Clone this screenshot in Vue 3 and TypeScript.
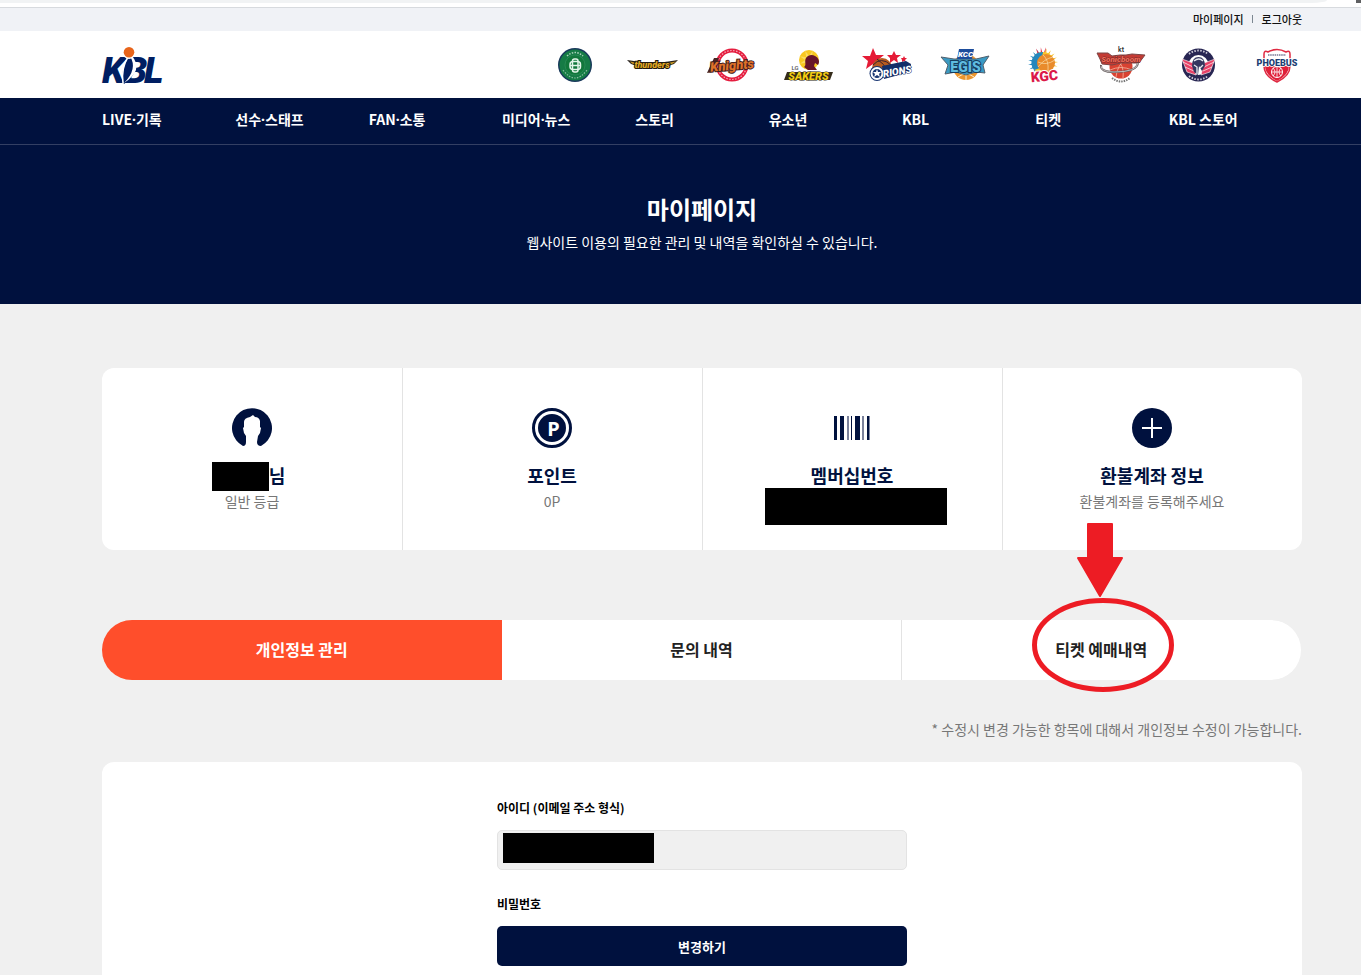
<script setup lang="ts">
import { ref } from 'vue'

const menus: string[][] = [['LIVE', '기록'], ['선수', '스태프'], ['FAN', '소통'], ['미디어', '뉴스'], ['스토리'], ['유소년'], ['KBL'], ['티켓'], ['KBL 스토어']]
const tabs: string[] = ['개인정보 관리', '문의 내역', '티켓 예매내역']
const activeTab = ref(0)

function rays(cx: number, cy: number, inner: number, outer: number, from: number, to: number, step: number): string {
  let d = ''
  for (let a = from; a < to; a += step) {
    const p = (deg: number, r: number) =>
      `${(cx + r * Math.cos((deg * Math.PI) / 180)).toFixed(1)} ${(cy + r * Math.sin((deg * Math.PI) / 180)).toFixed(1)}`
    d += `M${p(a, inner)}L${p(a + step / 2, outer)}L${p(a + step, inner)}Z`
  }
  return d
}
</script>

<template>
  <div class="page">
    <div class="browser-edge"><span class="address"></span><span class="corner"></span></div>
    <div class="topbar">
      <a href="#mypage">마이페이지</a><span class="divider"></span><a href="#logout">로그아웃</a>
    </div>

    <header class="header">
      <a href="#home" class="logo" aria-label="KBL">
        <svg width="62" height="36" viewBox="0 0 62 36">
          <g fill="#001e62" class="logo-text">
            <text x="0" y="36">K</text>
            <text x="22" y="36">B</text>
            <text x="42" y="36">L</text>
          </g>
          <path d="M27 9Q42 22 22 37Q17 26 27 9Z" fill="#001e62" />
          <path d="M26 10Q19 21 21 36" fill="none" stroke="#fff" stroke-width="1.500" />
          <path d="M30 9Q42 23 22 36Q36 22 28 9Z" fill="#fff" />
          <circle cx="27" cy="5.500" r="6.500" fill="#fff" />
          <circle cx="27" cy="5.300" r="5.300" fill="#e8651b" />
        </svg>
      </a>
      <div class="teams">
        <a href="#db" aria-label="DB Promy">
          <svg viewBox="0 0 50 36">
            <circle cx="25" cy="18" r="17" fill="#19395b" />
            <circle cx="25" cy="18" r="15.500" fill="#157b45" />
            <circle cx="25" cy="18" r="10" fill="#11773b" stroke="#3c9664" stroke-width=".5" />
            <path d="M17 9Q25 2 33 9" fill="none" stroke="#d4eadb" stroke-width="1.500" stroke-dasharray="1.500 1.300" stroke-opacity=".8" />
            <path d="M13 23Q25 39 37 23" fill="none" stroke="#d4eadb" stroke-width="1.200" stroke-dasharray="1.500 1.300" stroke-opacity=".6" />
            <rect x="20" y="14.500" width="10.500" height="8" rx="3" fill="none" stroke="#e4f5ea" stroke-width="1.500" />
            <rect x="22.500" y="12" width="5.500" height="13" rx="2" fill="none" stroke="#e4f5ea" stroke-width="1.500" />
            <path d="M20 18.500H30.500" stroke="#e4f5ea" stroke-width="1.500" />
          </svg>
        </a>
        <a href="#thunders" aria-label="Thunders">
          <svg viewBox="0 0 50 36">
            <path d="M-1 13L13 15L37 15L50 13L46 17L40 19L39 21L9 21L9 19L3 17Z" fill="#29231d" />
            <path d="M2 14.500L12 16.500L9 18L4 16.500ZM48 14.500L39 16L41 18L45 16.500Z" fill="#c99724" />
            <text x="24" y="21" font-size="9" class="mark" fill="#e0a822" stroke="#211a10" stroke-width="2">thunders</text>
          </svg>
        </a>
        <a href="#knights" aria-label="Knights">
          <svg viewBox="0 0 50 36">
            <circle cx="26" cy="18" r="14.500" fill="#fff" stroke="#e51d3f" stroke-width="4" />
            <circle cx="26" cy="18" r="14.500" fill="none" stroke="#fff" stroke-width="1.200" stroke-dasharray="1.500 1.500" stroke-opacity=".6" />
            <path d="M1 26L8 11L13 11L7 25Z" fill="#492523" />
            <text x="26" y="23" font-size="13" class="mark" fill="#df7228" stroke="#431d20" stroke-width="2" transform="rotate(-5 25 18)">Knights</text>
          </svg>
        </a>
        <a href="#sakers" aria-label="LG Sakers">
          <svg viewBox="0 0 50 36">
            <circle cx="25" cy="13" r="10" fill="#f9c81f" />
            <path :d="rays(25, 13, 4, 10, 0, 360, 45)" fill="#fbdc60" />
            <path d="M20 20C23 18 20 15 22 11C24 8 28 7 31 9C35 11 36 15 34 18L31 16L30 19L33 23H24Z" fill="#68142a" />
            <text x="11" y="23" font-size="6" class="mark plain" fill="#555">LG</text>
            <path d="M3 25H49L46 33H0Z" fill="#352c1b" />
            <text x="24.500" y="33" font-size="11" class="mark" fill="#f2cb13" stroke="#29230d" stroke-width="1">SAKERS</text>
          </svg>
        </a>
        <a href="#orions" aria-label="Orions">
          <svg viewBox="0 0 50 36">
            <g fill="#e51b36">
              <path d="M11 1L14 8L22 8L16 13L18 21L11 17L4 22L6 14L0 9L8 9Z" />
              <path d="M32 4L34 8L39 8L35 11L36 16L32 13L28 16L28 11L25 8L30 8Z" />
              <path d="M42 9L43 11L45 11L43 13L44 15L42 14L40 15L40 13L39 11L41 11Z" />
            </g>
            <circle cx="20" cy="21" r="10" fill="#b65b20" />
            <path d="M11 18Q19 9 29 18M15 12Q23 17 25 24" fill="none" stroke="#3a2230" />
            <path d="M20 19L44 14L49 17L48 25L22 32Z" fill="#132e68" />
            <circle cx="15" cy="26.500" r="7.500" fill="#183571" />
            <circle cx="15" cy="26.500" r="5.500" fill="#183571" stroke="#fff" stroke-width="2" />
            <path d="M15 22L16 25L19 25L17 27L18 30L15 28L12 30L13 27L11 25L14 25Z" fill="#fff" />
            <text x="35" y="28" font-size="10" class="mark" fill="#fff" stroke="#142f6a" stroke-width="1" transform="rotate(-10 35 24)">RIONS</text>
          </svg>
        </a>
        <a href="#egis" aria-label="KCC Egis">
          <svg viewBox="0 0 50 36">
            <circle cx="26" cy="20" r="13" fill="#eb952e" />
            <path d="M18 30Q26 24 34 30M26 22v11" fill="none" stroke="#fff0cd" />
            <path d="M1 10L14 12H36L49 9L43 18L45 26L36 25L26 28L16 25L5 27L8 18Z" fill="#3a9ac4" stroke="#50606d" stroke-width="1" />
            <text x="25.500" y="25" font-size="14" class="mark upright" fill="#5fbbe0" stroke="#163c5d" stroke-width="2">EGIS</text>
            <path d="M19 2H34L32 12H17Z" fill="#1d4d9c" />
            <text x="25.500" y="10" font-size="8" class="mark" fill="#fff">KCC</text>
          </svg>
        </a>
        <a href="#kgc" aria-label="KGC">
          <svg viewBox="0 0 50 36">
            <path :d="rays(25, 16, 8, 15, 110, 245, 18)" fill="#147fbb" />
            <path :d="rays(25, 16, 8, 16, 235, 280, 18)" fill="#df3750" />
            <path :d="rays(25, 16, 8, 15, 275, 390, 18)" fill="#f4bd20" />
            <circle cx="25" cy="16" r="11" fill="#f8c82d" />
            <path d="M25 5A11 11 0 0 0 16 23L22 21Z" fill="#2387bd" />
            <circle cx="28" cy="16" r="9" fill="#e98b2b" />
            <path d="M20 15Q28 19 37 13M25 8Q31 13 30 24M20 20Q26 12 35 10" fill="none" stroke="#f8d49b" stroke-width=".8" />
            <text x="26.500" y="34" font-size="14" class="mark upright" fill="#db1949" stroke="#fff" stroke-width="2" transform="rotate(-5 26 30)">KGC</text>
          </svg>
        </a>
        <a href="#kt" aria-label="KT Sonicboom">
          <svg viewBox="0 0 50 36">
            <circle cx="25" cy="20" r="11.500" fill="#d94231" />
            <path d="M19 11Q29 18 27 31M31 11Q21 18 20 30M14 23Q25 18 36 23" fill="none" stroke="#f4b6a0" stroke-width=".8" />
            <path d="M1 6L12 6L16 9L24 8L30 8L36 7L49 8L43 16L25 16L16 18L6 17L4 12Z" fill="#c43b34" stroke="#7b4646" stroke-width="1" />
            <path d="M5 18Q4 25 18 25Q42 25 42 15" fill="none" stroke="#645b5c" stroke-width="2" />
            <path d="M5 19Q5 25 18 25Q41 25 42 16" fill="none" stroke="#fff" stroke-width=".6" />
            <text x="25" y="5" font-size="7" class="mark plain" fill="#292929">kt</text>
            <text x="25" y="15" font-size="8" class="mark" fill="#ef6a58" stroke="#752a28" stroke-width="1">Sonicboom</text>
            <path d="M16 31Q25 38 34 31" fill="none" stroke="#777" stroke-width="2" stroke-dasharray="1.500 1" />
          </svg>
        </a>
        <a href="#etland" aria-label="Elephants">
          <svg viewBox="0 0 50 36">
            <circle cx="24.500" cy="18" r="16.500" fill="#282653" />
            <circle cx="24.500" cy="18" r="10" fill="#fff" />
            <path d="M8 12L19 16L22 28L13 25ZM41 12L30 16L27 28L36 25Z" fill="#e74066" stroke="#fff" stroke-width=".6" />
            <path d="M9 15L19 20M11 20L20 24M40 15L30 20M38 20L29 24" stroke="#fff" stroke-width=".7" />
            <path d="M24.500 10Q31 10 31 19L28 24L25 19L24 28L20 25L18 19Q18 10 24.500 10Z" fill="#35365f" />
            <path d="M20 14Q25 10 29 14M20 18L23 20L23 27M29 18L26 21" fill="none" stroke="#e9ecf2" stroke-width="1.300" />
            <path d="M15 7Q24.500 0 34 7M15 29Q24.500 36 34 29" fill="none" stroke="#d2cfdb" stroke-width="1.800" stroke-dasharray="1.500 1.500" />
          </svg>
        </a>
        <a href="#phoebus" aria-label="Phoebus">
          <svg viewBox="0 0 50 36">
            <path d="M12 7Q12 3 16 5Q25 0 34 5Q38 3 38 7V19Q38 29 25 35Q12 29 12 19Z" fill="#fff" stroke="#df2a42" stroke-width="1.500" />
            <path d="M13 19H37Q37 28 25 34Q13 28 13 19Z" fill="#df2039" />
            <path d="M16 8H34" stroke="#9a99ae" stroke-width="2" stroke-dasharray="1.500 .7" />
            <circle cx="25" cy="25" r="5.500" fill="none" stroke="#fff" />
            <path d="M20 25H30M25 20V30M21 21Q25 25 21 29M29 21Q25 25 29 29" fill="none" stroke="#fff" stroke-width=".8" />
            <text x="25" y="19" font-size="9" class="mark upright" fill="#1f3f73" stroke="#fff" stroke-width="1.500">PHOEBUS</text>
          </svg>
        </a>
      </div>
    </header>

    <nav class="nav" aria-label="주 메뉴">
      <a v-for="menu in menus" :key="menu.join('-')" href="#menu">{{ menu[0] }}<template v-if="menu[1]"><span class="dot">·</span>{{ menu[1] }}</template></a>
    </nav>

    <section class="hero">
      <h1>마이페이지</h1>
      <p>웹사이트 이용의 필요한 관리 및 내역을 확인하실 수 있습니다.</p>
    </section>

    <main class="main">
      <section class="cards">
        <div class="card">
          <svg class="icon" viewBox="0 0 40 40">
            <path d="M11 38A20 20 0 1 1 29 38Q25 38 25 34L26 28L28 25L29 20L28 19V13Q27 9 23 9L21 7L18 9Q12 10 12 14V19L11 20L12 25L14 28V34Q14 38 11 38Z" fill="#00113e" />
          </svg>
          <h2><span class="name-mask"></span>님</h2>
          <p>일반 등급</p>
        </div>
        <div class="card">
          <svg class="icon" viewBox="0 0 40 40">
            <circle cx="20" cy="20" r="18.500" fill="#fff" stroke="#00113e" stroke-width="3" />
            <circle cx="20" cy="20" r="14" fill="#00113e" />
            <text x="21.500" y="27.500" class="point-letter" fill="#fff">P</text>
          </svg>
          <h2>포인트</h2>
          <p>0P</p>
        </div>
        <div class="card">
          <svg class="icon" viewBox="0 0 40 40" shape-rendering="crispEdges">
            <path d="M2 8h3v24H2zM8 8h4v24H8zM19 8h1v24h-1zM23 8h5v24h-5zM35 8h2v24h-2z" fill="#00113e" />
            <path d="M15 8h2v24h-2zM30 8h2v24h-2zM37 8h1v24h-1z" fill="#7b829b" />
          </svg>
          <h2>멤버십번호</h2>
          <p class="number-mask"></p>
        </div>
        <div class="card">
          <svg class="icon" viewBox="0 0 40 40">
            <circle cx="20" cy="20" r="20" fill="#00113e" />
            <path d="M10 20H30M20 10V30" stroke="#fff" stroke-width="2" />
          </svg>
          <h2>환불계좌 정보</h2>
          <p>환불계좌를 등록해주세요</p>
        </div>
      </section>

      <div class="tabs" role="tablist">
        <button
          v-for="(tab, i) in tabs"
          :key="tab"
          type="button"
          role="tab"
          :aria-selected="activeTab === i"
          :class="{ active: activeTab === i }"
          @click="activeTab = i"
        >
          {{ tab }}
          <svg v-if="i === 2" class="pointer" viewBox="0 0 142 170" aria-hidden="true">
            <path d="M56 1H80V35H90L68 73L46 35H56Z" fill="#ed1c24" stroke="#ed1c24" stroke-width="2" stroke-linejoin="round" />
            <ellipse cx="71" cy="122" rx="68.500" ry="44.500" fill="none" stroke="#ed1c24" stroke-width="5" />
          </svg>
        </button>
      </div>

      <p class="note">* 수정시 변경 가능한 항목에 대해서 개인정보 수정이 가능합니다.</p>

      <section class="panel">
        <form class="form" @submit.prevent>
          <label for="user-id">아이디 (이메일 주소 형식)</label>
          <div class="field">
            <input id="user-id" type="text" readonly />
            <span class="id-mask"></span>
          </div>
          <label for="change-password">비밀번호</label>
          <button id="change-password" type="button">변경하기</button>
        </form>
      </section>
    </main>
  </div>
</template>

<style>
body {
  margin: 0;
  background: #f0f0f0;
}
</style>

<style scoped>
.page {
  --navy: #00113e;
  --gutter: 0 59px 0 102px;
  min-height: 100vh;
  display: flex;
  flex-direction: column;
  font-family: "Noto Sans CJK KR", "Noto Sans", sans-serif;
  font-size: 14px;
  line-height: 24px;
  color: #222;
  background: #f0f0f0;
}
.page * { box-sizing: border-box; }
a { color: inherit; text-decoration: none; }
h1, h2, p { margin: 0; }
button, input { font-family: inherit; }
button { cursor: pointer; }
svg { display: block; overflow: visible; }

.browser-edge {
  height: 8px;
  display: flex;
  justify-content: space-between;
  background: #fff;
  border-bottom: 1px solid #d7dade;
}
.address {
  flex: 1;
  height: 3px;
  margin-right: 29px;
  background: #f1f3f4;
  border-bottom-right-radius: 16px 3px;
}
.corner { width: 5px; height: 3px; background: #5f6062; }
.topbar {
  height: 23px;
  padding: 0 59px 2px 102px;
  display: flex;
  justify-content: flex-end;
  align-items: center;
  font-size: 11px;
  font-weight: 500;
  color: #111;
  background: #f0f2f6;
}
.divider { width: 1px; height: 8px; margin: 0 9px 0 8px; background: #7c8791; }

.header {
  height: 67px;
  padding: var(--gutter);
  display: flex;
  justify-content: space-between;
  align-items: center;
  background: #fff;
}
.logo-text {
  font-family: Roboto, "Liberation Sans", sans-serif;
  font-size: 37px;
  font-style: italic;
  font-weight: 900;
}
.teams { display: flex; gap: 28px; }
.teams svg { width: 50px; height: 36px; }
.mark {
  font-family: Roboto, "Liberation Sans", sans-serif;
  font-weight: 900;
  font-style: italic;
  text-anchor: middle;
  paint-order: stroke;
}
.upright { font-style: normal; }
.plain { font-style: normal; font-weight: 500; }

.nav {
  padding: 10px 59px 14px 102px;
  display: grid;
  grid-template-columns: repeat(9, 1fr);
  line-height: 22px;
  font-weight: 700;
  color: #fff;
  background: var(--navy);
  border-bottom: 1px solid #333f63;
}
.dot { font-family: "Noto Sans", sans-serif; line-height: 1; }
.hero {
  padding: 48px 59px 50px 102px;
  text-align: center;
  color: #fff;
  background: var(--navy);
}
.hero h1 { margin-bottom: 5px; font-size: 24px; line-height: 32px; }

.main {
  flex: 1;
  display: flex;
  flex-direction: column;
  padding: 64px 59px 0 102px;
}
.cards {
  display: grid;
  grid-template-columns: repeat(4, 1fr);
  background: #fff;
  border-radius: 12px;
}
.card {
  position: relative;
  padding: 40px 0 36px;
  text-align: center;
  color: #777;
  line-height: 26px;
}
.card + .card { box-shadow: inset 1px 0 #e3e3e3; }
.icon { width: 40px; height: 40px; margin: 0 auto 14px; }
.point-letter {
  font-family: "Noto Sans", sans-serif;
  font-size: 20px;
  font-weight: 700;
  text-anchor: middle;
}
.card h2 { font-size: 18px; font-weight: 700; line-height: 26px; color: var(--navy); }
.name-mask {
  position: relative;
  display: inline-block;
  width: 50px;
  height: 16px;
}
.name-mask::before {
  content: "";
  position: absolute;
  right: 0;
  top: -5px;
  width: 57px;
  height: 29px;
  background: #000;
}
.number-mask {
  position: absolute;
  top: 120px;
  left: 63px;
  width: 182px;
  height: 37px;
  background: #000;
}

.tabs {
  display: grid;
  grid-template-columns: repeat(3, 1fr);
  height: 60px;
  margin: 70px 1px 0 0;
}
.tabs button {
  position: relative;
  padding: 0 0 3px;
  border: 0;
  font-size: 16px;
  font-weight: 700;
  color: #222;
  background: #fff;
}
.tabs button:first-child { border-radius: 30px 0 0 30px; }
.tabs button:last-child { border-radius: 0 30px 30px 0; }
.tabs button + button { box-shadow: inset 1px 0 #e3e3e3; }
.tabs .active { color: #fff; background: #ff4e2b; }
.tabs .active + button { box-shadow: none; }
.pointer {
  position: absolute;
  left: calc(50% - 69px);
  top: -97px;
  width: 142px;
  height: 170px;
  pointer-events: none;
}
.note { margin: 37px 0 21px; text-align: right; color: #777; }

.panel {
  flex: 1;
  padding: 34px 0 9px;
  background: #fff;
  border-radius: 12px 12px 0 0;
}
.form {
  max-width: 410px;
  margin: 0 auto;
  display: flex;
  flex-direction: column;
}
.form label { margin-bottom: 10px; font-size: 12px; font-weight: 700; color: #000; }
.field { position: relative; margin-bottom: 22px; }
.field input {
  display: block;
  width: 100%;
  height: 40px;
  padding: 0 12px;
  border: 1px solid #e3e3e3;
  border-radius: 5px;
  font-size: 14px;
  background: #f0f0f0;
}
.id-mask {
  position: absolute;
  left: 6px;
  top: 3px;
  width: 151px;
  height: 30px;
  background: #000;
}
.form button {
  height: 40px;
  padding: 0;
  border: 0;
  border-radius: 5px;
  font-size: 13px;
  font-weight: 700;
  color: #fff;
  background: var(--navy);
}
</style>
